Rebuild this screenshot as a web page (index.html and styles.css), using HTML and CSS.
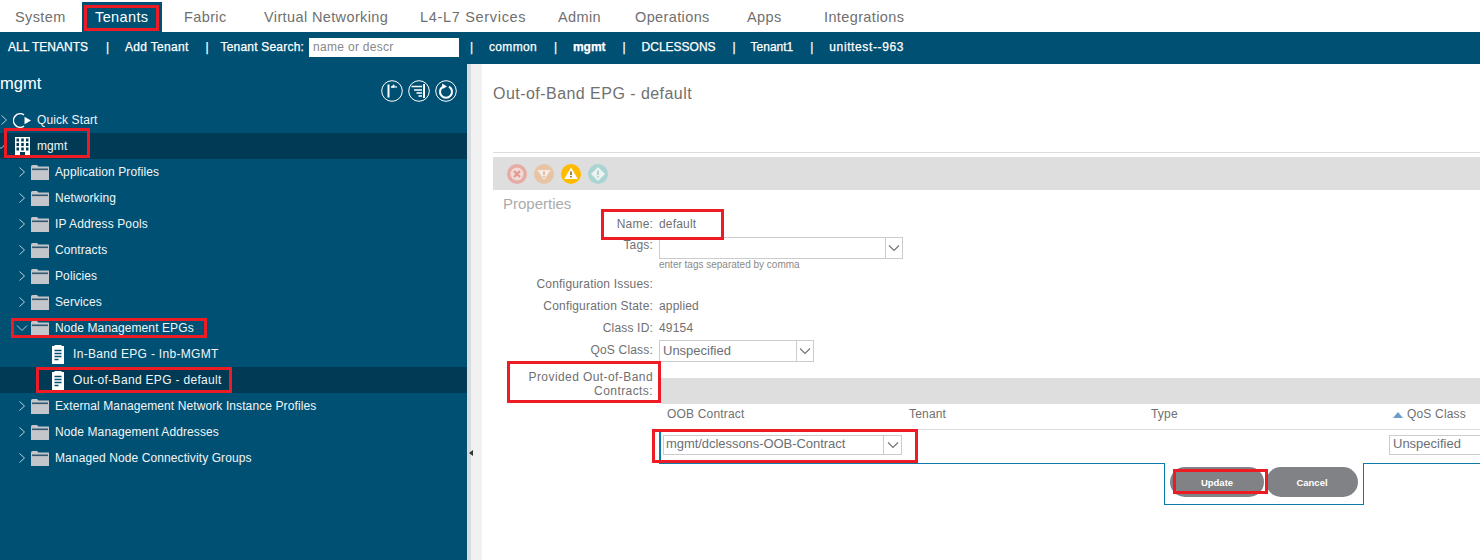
FILE: index.html
```html
<!DOCTYPE html>
<html lang="en">
<head>
<meta charset="utf-8">
<title>Out-of-Band EPG - default</title>
<link rel="stylesheet" href="styles.css">
</head>
<body>
<svg class="defs" width="0" height="0" aria-hidden="true">
  <symbol id="folder" viewBox="0 0 18 15">
    <path d="M0 1.5 Q0 0 1.5 0 H6 L7.5 1.5 H18 V15 H0 Z" fill="#c3c6ca"/>
    <rect x="1" y="3.5" width="16" height="1.6" fill="#33586f"/>
  </symbol>
  <symbol id="chev-r" viewBox="0 0 8 12"><path d="M1.5 1.5 L6.5 6 L1.5 10.5" fill="none" stroke="#b9cdd8" stroke-width="1"/></symbol>
  <symbol id="chev-d" viewBox="0 0 12 8"><path d="M1 1.5 L6 6.5 L11 1.5" fill="none" stroke="#b9cdd8" stroke-width="1"/></symbol>
  <symbol id="sel-chev" viewBox="0 0 12 8"><path d="M1 1.5 L6 6.5 L11 1.5" fill="none" stroke="#6c7378" stroke-width="1.1"/></symbol>
  <symbol id="note" viewBox="0 0 12 19">
    <path d="M0 1 H2.5 V0 H9.5 V1 H12 V19 H0 Z" fill="#fff"/>
    <path d="M2.5 5.5 H9.5 M2.5 8.5 H9.5 M2.5 11.5 H9.5 M2.5 14.5 H6.5" stroke="#005073" stroke-width="1.5"/>
  </symbol>
</svg>
<div class="app">
  <nav class="topnav">
    <a class="tab">System</a>
    <a class="tab active">Tenants</a>
    <a class="tab">Fabric</a>
    <a class="tab">Virtual Networking</a>
    <a class="tab wide-tab">L4-L7 Services</a>
    <a class="tab">Admin</a>
    <a class="tab">Operations</a>
    <a class="tab">Apps</a>
    <a class="tab">Integrations</a>
  </nav>
  <div class="subbar">
    <span class="caps first">ALL TENANTS</span><i>|</i>
    <span>Add Tenant</span><i>|</i>
    <label class="search">Tenant Search: <input type="text" placeholder="name or descr"></label><i>|</i>
    <span>common</span><i>|</i>
    <b>mgmt</b><i>|</i>
    <span class="caps">DCLESSONS</span><i>|</i>
    <span class="tight">Tenant1</span><i>|</i>
    <span class="dashed">unittest--963</span>
  </div>
  <div class="main">
    <aside class="side">
      <header class="side-head">
        <h2>mgmt</h2>
        <div class="side-tools">
          <svg width="22" height="22" viewBox="0 0 22 22"><circle cx="11" cy="11" r="10.3" fill="none" stroke="#fff" stroke-width="1"/><path d="M7.5 4.5 V17.5" stroke="#fff" stroke-width="2"/><path d="M10 7 H16" stroke="#fff" stroke-width="1.2"/><path d="M13 4.8 L10.5 7 L13 7 Z" fill="#fff" stroke="#fff"/></svg>
          <svg width="22" height="22" viewBox="0 0 22 22"><circle cx="11" cy="11" r="10.3" fill="none" stroke="#fff" stroke-width="1"/><path d="M3.5 6.5 H14 M6 10 H14 M8.5 13 H14 M10.5 16 H14" stroke="#fff" stroke-width="1.3"/><path d="M16 4 V18" stroke="#fff" stroke-width="2"/></svg>
          <svg width="22" height="22" viewBox="0 0 22 22"><circle cx="11" cy="11" r="10.3" fill="none" stroke="#fff" stroke-width="1"/><path d="M8 6.6 A6 6 0 1 0 14 6.6" fill="none" stroke="#fff" stroke-width="2"/><path d="M7 3.5 L12 6.6 L7.5 9 Z" fill="#fff"/></svg>
        </div>
      </header>
      <ul class="tree">
        <li class="node l0"><svg class="chev"><use href="#chev-r"/></svg><svg class="ico" viewBox="0 0 18 15"><path d="M11 1.8 A6.8 6.8 0 1 0 11 13.2" fill="none" stroke="#fff" stroke-width="1.5"/><path d="M11.5 3.8 L18 7.5 L11.5 11.2 Z" fill="#fff"/></svg>Quick Start</li>
        <li class="node l0 sel"><svg class="chev"><use href="#chev-d"/></svg><svg class="bld" viewBox="0 0 15 18"><path fill="#fff" fill-rule="evenodd" d="M0 0 H15 V18 H10 V15 H5 V18 H0 Z M1.5 1.5 V4.5 H4 V1.5 Z M6.2 1.5 V4.5 H8.8 V1.5 Z M11 1.5 V4.5 H13.5 V1.5 Z M1.5 6 V9 H4 V6 Z M6.2 6 V9 H8.8 V6 Z M11 6 V9 H13.5 V6 Z M1.5 10.5 V13.5 H4 V10.5 Z M6.2 10.5 V13.5 H8.8 V10.5 Z M11 10.5 V13.5 H13.5 V10.5 Z"/></svg>mgmt</li>
        <li class="node l1"><svg class="chev"><use href="#chev-r"/></svg><svg class="ico"><use href="#folder"/></svg>Application Profiles</li>
        <li class="node l1"><svg class="chev"><use href="#chev-r"/></svg><svg class="ico"><use href="#folder"/></svg>Networking</li>
        <li class="node l1"><svg class="chev"><use href="#chev-r"/></svg><svg class="ico"><use href="#folder"/></svg>IP Address Pools</li>
        <li class="node l1"><svg class="chev"><use href="#chev-r"/></svg><svg class="ico"><use href="#folder"/></svg>Contracts</li>
        <li class="node l1"><svg class="chev"><use href="#chev-r"/></svg><svg class="ico"><use href="#folder"/></svg>Policies</li>
        <li class="node l1"><svg class="chev"><use href="#chev-r"/></svg><svg class="ico"><use href="#folder"/></svg>Services</li>
        <li class="node l1"><svg class="chev wide"><use href="#chev-d"/></svg><svg class="ico"><use href="#folder"/></svg>Node Management EPGs</li>
        <li class="node l2"><svg class="leaf"><use href="#note"/></svg>In-Band EPG - Inb-MGMT</li>
        <li class="node l2 sel"><svg class="leaf"><use href="#note"/></svg>Out-of-Band EPG - default</li>
        <li class="node l1"><svg class="chev"><use href="#chev-r"/></svg><svg class="ico"><use href="#folder"/></svg>External Management Network Instance Profiles</li>
        <li class="node l1"><svg class="chev"><use href="#chev-r"/></svg><svg class="ico"><use href="#folder"/></svg>Node Management Addresses</li>
        <li class="node l1"><svg class="chev"><use href="#chev-r"/></svg><svg class="ico"><use href="#folder"/></svg>Managed Node Connectivity Groups</li>
      </ul>
    </aside>
    <div class="splitter"><span class="grip"></span></div>
    <section class="content">
      <h1>Out-of-Band EPG - default</h1>
      <div class="faults">
        <svg width="20" height="20" viewBox="0 0 20 20"><circle cx="10" cy="10" r="10" fill="#e6aba3"/><circle cx="10" cy="10" r="6.5" fill="#f1dbd8"/><path d="M7 7 L13 13 M13 7 L7 13" stroke="#e09a90" stroke-width="2.4"/></svg>
        <svg width="20" height="20" viewBox="0 0 20 20"><circle cx="10" cy="10" r="10" fill="#e8c4a6"/><path d="M3.5 6 H16.5 L10 16 Z" fill="#f5ece4"/><path d="M10 7.5 V11 M10 12 V13.4" stroke="#e0b08c" stroke-width="1.6"/></svg>
        <svg width="20" height="20" viewBox="0 0 20 20"><circle cx="10" cy="10" r="10" fill="#ffbb00"/><path d="M10 3.5 L16.8 15 H3.2 Z" fill="#fff"/><path d="M10 7.5 V11 M10 12 V13.6" stroke="#8a6b10" stroke-width="1.6"/></svg>
        <svg width="20" height="20" viewBox="0 0 20 20"><circle cx="10" cy="10" r="10" fill="#a9d4d1"/><path d="M10 3 L17 10 L10 17 L3 10 Z" fill="#eef3f2"/><path d="M10 6.5 V11 M10 12 V13.6" stroke="#9fcdca" stroke-width="1.6"/></svg>
      </div>
      <h3 class="props">Properties</h3>
      <div class="row r-name"><span class="lbl">Name:</span><span>default</span></div>
      <div class="row r-tags">
        <span class="lbl">Tags:</span>
        <div>
          <div class="select tags"><span class="val"></span><span class="arrow"><svg><use href="#sel-chev"/></svg></span></div>
          <div class="hint">enter tags separated by comma</div>
        </div>
      </div>
      <div class="row r-plain"><span class="lbl">Configuration Issues:</span><span></span></div>
      <div class="row r-plain"><span class="lbl">Configuration State:</span><span>applied</span></div>
      <div class="row r-plain"><span class="lbl">Class ID:</span><span>49154</span></div>
      <div class="row r-qos">
        <span class="lbl">QoS Class:</span>
        <div class="select qos"><span class="val">Unspecified</span><span class="arrow"><svg><use href="#sel-chev"/></svg></span></div>
      </div>
      <div class="row r-prov">
        <span class="lbl lbl-prov">Provided Out-of-Band Contracts:</span>
        <div class="prov">
          <div class="prov-bar"></div>
          <div class="thead">
            <span>OOB Contract</span><span>Tenant</span><span>Type</span>
            <span class="sorted"><svg width="10" height="6" viewBox="0 0 10 6"><path d="M5 0 L10 6 H0 Z" fill="#6b9ccb"/></svg>QoS Class</span>
          </div>
          <div class="edit-row">
            <div class="select contract"><span class="val">mgmt/dclessons-OOB-Contract</span><span class="arrow"><svg><use href="#sel-chev"/></svg></span></div>
            <div class="select cell-qos"><span class="val">Unspecified</span></div>
          </div>
          <div class="edit-actions">
            <button class="btn">Update</button>
            <button class="btn">Cancel</button>
          </div>
        </div>
      </div>
    </section>
  </div>
  <div class="mark m-tenants"></div>
  <div class="mark m-mgmt"></div>
  <div class="mark m-node"></div>
  <div class="mark m-oob"></div>
  <div class="mark m-name"></div>
  <div class="mark m-prov"></div>
  <div class="mark m-contract"></div>
  <div class="mark m-update"></div>
</div>
</body>
</html>
```
FILE: styles.css
```css
* { box-sizing: border-box; }
html, body { margin: 0; padding: 0; }
body { font-family: "Liberation Sans", Arial, sans-serif; color: #6b6b6b; background: #fff; }
.defs { position: absolute; }
.app { position: relative; width: 1480px; height: 560px; overflow: hidden; display: flex; flex-direction: column; }

.topnav { height: 32px; flex: none; padding: 2px 0 0 2px; display: grid; grid-template-columns: 80px 89px 80px 156px 138px 77px 112px 77px auto; justify-content: start; }
.tab { padding-left: 13px; font-size: 14.5px; line-height: 30px; color: #707070; letter-spacing: .38px; white-space: nowrap; }
.tab.active { width: 80px; background: #005073; color: #fff; }
.tab.wide-tab { letter-spacing: .68px; }

.subbar { height: 32px; flex: none; background: #005073; color: #fff; display: flex; align-items: center; gap: 17px; padding: 0 0 2px 8px; font-size: 12px; letter-spacing: .3px; white-space: nowrap; -webkit-text-stroke: .25px #fff; }
.subbar i { font-style: normal; width: 2px; }
.subbar b { font-weight: 700; letter-spacing: 0; }
.caps { letter-spacing: 0; }
.first { margin-right: 1px; }
.tight { letter-spacing: 0; margin-left: -1px; }
.dashed { letter-spacing: .62px; }
.search { display: flex; align-items: center; gap: 5px; margin: 0 -6px 0 -4px; letter-spacing: .2px; }
.search input { width: 150px; height: 19px; border: 0; padding: 0 4px; font: 12px "Liberation Sans", Arial, sans-serif; background: #fff; -webkit-text-stroke: 0; }
.search input::placeholder { color: #888; opacity: 1; letter-spacing: .3px; }

.main { flex: 1; display: flex; min-height: 0; }
.side { width: 467px; flex: none; background: #005073; color: #fff; }
.side-head { height: 43px; display: flex; justify-content: space-between; }
.side-head h2 { margin: 9px 0 0; font-size: 16.5px; font-weight: 400; line-height: 20px; }
.side-tools { display: flex; gap: 5px; padding: 16px 10px 0 0; }
.tree { list-style: none; margin: 0; padding: 0; }
.node { height: 26px; display: flex; align-items: center; font-size: 12px; letter-spacing: .1px; color: #f2f6f8; white-space: nowrap; }
.node.sel { background: #003a54; }
.node.l1 { padding-left: 18px; }
.node.l2 { padding-left: 52px; letter-spacing: .32px; }
.chev { width: 8px; height: 12px; margin-right: 5px; flex: none; }
.node.l0.sel .chev { margin-left: -5px; width: 12px; height: 8px; margin-right: 6px; }
.chev.wide { width: 12px; height: 8px; margin: 0 3px 0 -2px; }
.ico { width: 18px; height: 15px; margin-right: 6px; flex: none; }
.bld { width: 15px; height: 18px; margin: 0 7px 0 2px; flex: none; }
.leaf { width: 12px; height: 19px; margin-right: 9px; flex: none; }

.splitter { width: 15px; flex: none; background: #f1f1f1; border-left: 4px solid #d9dcde; position: relative; }
.grip { position: absolute; left: -2px; top: 386px; width: 0; height: 0; border: 3px solid transparent; border-right: 4px solid #333; border-left: 0; }

.content { flex: 1; min-width: 0; margin-top: 10px; background: #fff; padding-left: 11px; overflow: hidden; font-size: 12px; letter-spacing: .18px; color: #707070; }
.content h1 { margin: 0; height: 79px; padding-top: 10px; font-size: 16px; line-height: 19px; font-weight: 400; color: #707070; letter-spacing: .46px; border-bottom: 1px solid #dcdcdc; }
.faults { margin-top: 4px; height: 33px; background: #dedede; display: flex; align-items: center; gap: 7px; padding-left: 14px; }
.props { margin: 5px 0 0 10px; height: 19px; font-size: 15px; line-height: 18px; font-weight: 400; letter-spacing: 0; color: #ababab; }

.row { display: grid; grid-template-columns: 160px 1fr; column-gap: 6px; }
.lbl { text-align: right; }
.lbl-prov { letter-spacing: .42px; }
.r-name { height: 20px; line-height: 20px; }
.r-tags { margin-top: 3px; height: 33px; line-height: 16px; }
.r-plain { margin-top: 2px; height: 20px; line-height: 20px; }
.r-tags + .r-plain { margin-top: 4px; }
.r-qos { margin-top: 2px; height: 22px; line-height: 20px; }
.r-prov { margin-top: 8px; line-height: 14px; }
.hint { font-size: 10px; line-height: 11px; letter-spacing: 0; color: #8a8a8a; }

.select { display: flex; border: 1px solid #ccc; background: #fff; color: #6b7075; font-size: 13px; letter-spacing: 0; }
.val { flex: 1; padding-left: 3px; line-height: 20px; white-space: nowrap; overflow: hidden; }
.arrow { width: 17px; flex: none; border-left: 1px solid #ccc; display: flex; align-items: center; justify-content: center; }
.arrow svg { width: 12px; height: 8px; }
.tags { width: 244px; height: 22px; }
.qos { width: 155px; height: 22px; }

.prov { margin-left: 0; }
.prov-bar { margin: 8px 0 0 2px; height: 26px; background: #dedede; }
.thead { display: grid; grid-template-columns: repeat(4, 242px); height: 26px; margin-left: 2px; padding-left: 6px; line-height: 21px; border-bottom: 1px solid #ddd; white-space: nowrap; }
.sorted { display: flex; align-items: center; gap: 4px; height: 21px; }
.edit-row { height: 34px; border-left: 2px solid #0e7bab; border-bottom: 1px solid #0e7bab; padding: 5px 0 0 2px; display: flex; width: 821px; }
.contract { width: 239px; height: 20px; flex: none; }
.contract .val { padding-left: 2px; line-height: 16px; letter-spacing: -.05px; }
.contract .arrow { width: 18px; }
.cell-qos { margin-left: 487px; width: 120px; height: 20px; flex: none; }
.cell-qos .val { line-height: 16px; }
.edit-actions { margin: -1px 0 0 505px; width: 200px; height: 42px; border: 1px solid #0e7bab; border-top: 0; background: #fff; display: flex; gap: 2px; padding: 4px 0 0 5px; }
.btn { width: 94px; height: 30px; border: 0; border-radius: 15px; background: #808285; color: #fff; font: 700 9.5px "Liberation Sans", Arial, sans-serif; }
.btn + .btn { width: 92px; }

.mark { position: absolute; border: 3px solid #ed1c24; }
.m-tenants { left: 84px; top: 5px; width: 75px; height: 26px; }
.m-mgmt { left: 4px; top: 128px; width: 86px; height: 30px; }
.m-node { left: 11px; top: 318px; width: 196px; height: 20px; }
.m-oob { left: 36px; top: 367px; width: 196px; height: 26px; }
.m-name { left: 601px; top: 209px; width: 123px; height: 31px; }
.m-prov { left: 507px; top: 361px; width: 154px; height: 42px; }
.m-contract { left: 652px; top: 429px; width: 266px; height: 34px; }
.m-update { left: 1173px; top: 469px; width: 95px; height: 25px; }
```
